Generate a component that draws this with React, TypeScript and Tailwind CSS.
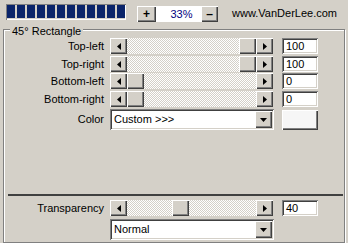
import React from "react";

const raised =
  "shadow-[inset_1px_1px_#ffffff,inset_-1px_-1px_#404040,inset_-2px_-2px_#808080]";
const sunken =
  "shadow-[inset_1px_1px_#808080,inset_-1px_-1px_#ffffff,inset_2px_2px_#404040,inset_-2px_-2px_#d4d0c8]";

const sliders = [
  { label: "Top-left", value: 100, gap: "mt-[8px]" },
  { label: "Top-right", value: 100, gap: "mt-[2px]" },
  { label: "Bottom-left", value: 0, gap: "mt-[1px]" },
  { label: "Bottom-right", value: 0, gap: "mt-[2px]" },
];

function Arrow({ dir }: { dir: "left" | "right" | "down" }) {
  if (dir === "down") {
    return (
      <svg width="7" height="4" viewBox="0 0 7 4">
        <path d="M0 0h7L3.5 4z" fill="#000" />
      </svg>
    );
  }
  return (
    <svg width="4" height="7" viewBox="0 0 4 7">
      <path d={dir === "left" ? "M4 0v7L0 3.5z" : "M0 0v7l4-3.5z"} fill="#000" />
    </svg>
  );
}

function ScrollBar({ value }: { value: number }) {
  // track is 129px, thumb 17px
  const offset = Math.round((value / 100) * (129 - 17));
  return (
    <div className="flex w-[163px] h-[16px]">
      <div className={`w-[17px] h-[16px] bg-[#d4d0c8] flex items-center justify-center ${raised}`}>
        <Arrow dir="left" />
      </div>
      <div className="flex-1 flex bg-[repeating-conic-gradient(#d4d0c8_0%_25%,#ffffff_0%_50%)] bg-[length:2px_2px]">
        <div
          style={{ marginLeft: offset }}
          className={`w-[17px] h-[16px] bg-[#d4d0c8] ${raised}`}
        />
      </div>
      <div className={`w-[17px] h-[16px] bg-[#d4d0c8] flex items-center justify-center ${raised}`}>
        <Arrow dir="right" />
      </div>
    </div>
  );
}

function ValueBox({ value }: { value: number }) {
  return (
    <div className={`ml-[9px] w-[36px] h-[16px] bg-white flex items-center pl-[4px] leading-none ${sunken}`}>
      {value}
    </div>
  );
}

function Combo({ text }: { text: string }) {
  return (
    <div className={`w-[164px] h-[21px] bg-white flex items-center justify-between pl-[4px] pr-[2px] ${sunken}`}>
      <span className="leading-none">{text}</span>
      <div className={`w-[17px] h-[17px] bg-[#d4d0c8] flex items-center justify-center ${raised}`}>
        <Arrow dir="down" />
      </div>
    </div>
  );
}

export default function App() {
  return (
    <div className="w-[348px] h-[243px] bg-[#d4d0c8] overflow-hidden font-['Liberation_Sans',Arial,sans-serif] text-[11px] text-black">
      {/* top bar */}
      <div className="h-[29px] flex items-start pt-[4px] pl-[6px] pr-[11px]">
        <div className={`w-[120px] h-[16px] bg-[#d4d0c8] flex gap-[2px] pl-[1px] pt-[1px] shadow-[inset_1px_1px_#808080,inset_-1px_-1px_#ffffff]`}>
          {Array.from({ length: 12 }).map((_, i) => (
            <div key={i} className="w-[8px] h-[13px] bg-[#0a246a]" />
          ))}
        </div>
        <div className={`ml-[11px] mt-[2px] w-[19px] h-[16px] bg-[#d4d0c8] flex items-center justify-center font-bold text-[12px] leading-none ${raised}`}>
          +
        </div>
        <div className="mt-[2px] w-[45px] h-[16px] bg-white flex items-center justify-center pl-[6px] text-[#000080] leading-none">
          33%
        </div>
        <div className={`mt-[2px] w-[17px] h-[16px] bg-[#d4d0c8] flex items-center justify-center font-bold text-[12px] leading-none ${raised}`}>
          –
        </div>
        <span className="ml-auto mt-[4px] leading-none">www.VanDerLee.com</span>
      </div>

      {/* group box */}
      <div className="relative ml-[3px] w-[342px] h-[214px] border border-[#808080] shadow-[inset_1px_1px_#ffffff,1px_1px_#ffffff]">
        <span className="absolute left-[6px] top-[-5px] px-[2px] bg-[#d4d0c8] leading-[12px]">
          45° Rectangle
        </span>

        {sliders.map((s) => (
          <div key={s.label} className={`flex items-center h-[16px] ${s.gap}`}>
            <span className="w-[100px] mr-[6px] text-right leading-none">{s.label}</span>
            <ScrollBar value={s.value} />
            <ValueBox value={s.value} />
          </div>
        ))}

        <div className="flex items-center h-[21px] mt-[2px]">
          <span className="w-[100px] mr-[6px] text-right leading-none">Color</span>
          <Combo text="Custom >>>" />
          <div className={`ml-[8px] w-[36px] h-[20px] bg-[#f6f6f6] ${raised}`} />
        </div>

        <div className="mt-[64px] ml-[4px] mr-[1px] h-[2px] bg-[#404040]" />

        <div className="flex items-center h-[16px] mt-[4px]">
          <span className="w-[100px] mr-[6px] text-right leading-none">Transparency</span>
          <ScrollBar value={40} />
          <ValueBox value={40} />
        </div>

        <div className="flex mt-[3px] pl-[106px]">
          <Combo text="Normal" />
        </div>
      </div>
    </div>
  );
}
